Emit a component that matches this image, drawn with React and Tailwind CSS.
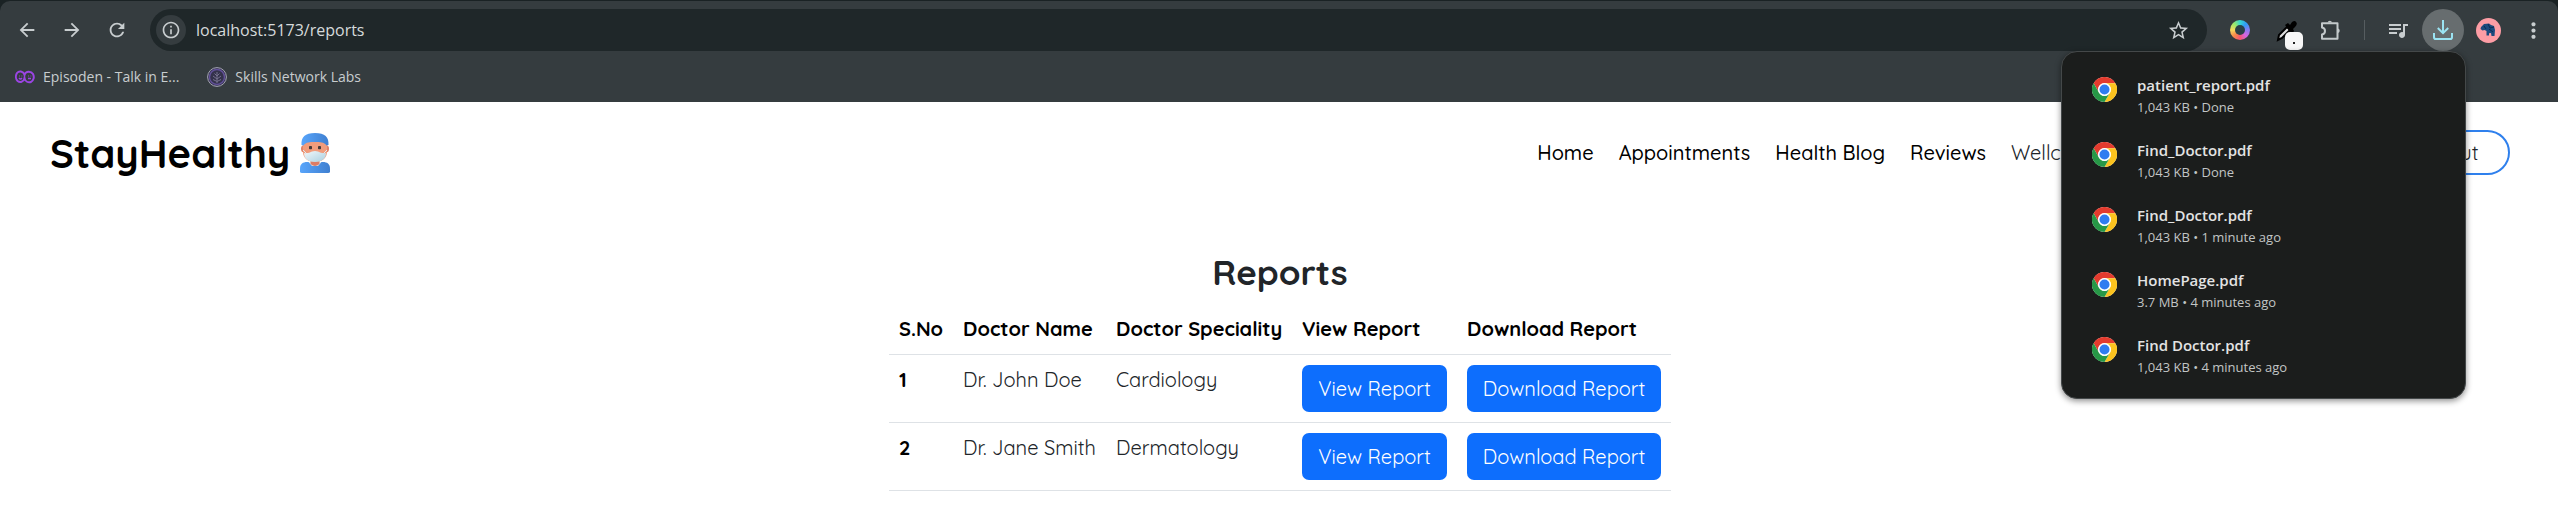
import React from "react";
import {
  MdArrowBack,
  MdArrowForward,
  MdRefresh,
  MdInfoOutline,
  MdStarBorder,
  MdQueueMusic,
  MdMoreVert,
} from "react-icons/md";

const downloads = [
  { name: "patient_report.pdf", meta: "1,043 KB • Done" },
  { name: "Find_Doctor.pdf", meta: "1,043 KB • Done" },
  { name: "Find_Doctor.pdf", meta: "1,043 KB • 1 minute ago" },
  { name: "HomePage.pdf", meta: "3.7 MB • 4 minutes ago" },
  { name: "Find Doctor.pdf", meta: "1,043 KB • 4 minutes ago" },
];

const reports = [
  { id: 1, doctor: "Dr. John Doe", speciality: "Cardiology" },
  { id: 2, doctor: "Dr. Jane Smith", speciality: "Dermatology" },
];

const navLinks = ["Home", "Appointments", "Health Blog", "Reviews"];

function ChromeLogo() {
  return (
    <svg viewBox="0 0 48 48" className="size-[25px] shrink-0" aria-hidden="true">
      <circle cx="24" cy="24" r="24" fill="#fff" />
      <path d="M3.2 12A24 24 0 0 1 44.8 12H24a12 12 0 0 0-10.4 18z" fill="#e33b2e" />
      <path d="M44.8 12A24 24 0 0 1 24 48l10.4-18A12 12 0 0 0 24 12z" fill="#fcc31e" />
      <path d="M24 48A24 24 0 0 1 3.2 12l10.400 18a12 12 0 0 0 20.800 0z" fill="#279847" />
      <circle cx="24" cy="24" r="12.4" fill="#fff" />
      <circle cx="24" cy="24" r="9.6" fill="#2f7cf0" />
    </svg>
  );
}

function HealthWorker() {
  return (
    <svg viewBox="0 0 30 40" className="h-10 w-[30px] shrink-0" aria-hidden="true">
      <defs>
        <linearGradient id="cap" x1="0" x2="1">
          <stop offset="0" stopColor="#58a5fb" />
          <stop offset="1" stopColor="#3f7fd0" />
        </linearGradient>
        <linearGradient id="mask" x1="0" x2="1" y2="1">
          <stop offset="0" stopColor="#f2f8fb" />
          <stop offset="1" stopColor="#a9cfe0" />
        </linearGradient>
      </defs>
      <path d="M0 38.500v-3C0 31 3 29 7 29h16c4 0 7 2 7 6.500v3Q30 40 28 40H2q-2 0-2-1.500z" fill="url(#cap)" />
      <path d="M8.500 29h13L18 33h-6z" fill="#e2eef4" />
      <path d="M10.500 27h9v4q-4.500 4-9 0z" fill="#dd7c66" />
      <rect x="1" y="12" width="28" height="7.500" rx="3.500" fill="#e08268" />
      <path d="M3 8h24v11c0 6-5 10-12 10S3 25 3 19z" fill="#f19c7c" />
      <path d="M1.500 12C1 4 5 0 15 0s14 4 13.500 12l-2 .5C24 9 20 9 15 9S6 9 3.500 12.500z" fill="url(#cap)" />
      <path d="M3 17l4 4M27 17l-4 4" stroke="#dfeaf0" strokeWidth="1" />
      <path d="M4 20Q8 21 12 18.500q3-1 6 0 4 2.500 8 1.500C26 26 21 29 15 29S4 26 4 20z" fill="url(#mask)" />
      <rect x="9" y="13" width="3" height="3.200" rx=".8" fill="#453a3a" />
      <rect x="18" y="13" width="3" height="3.200" rx=".8" fill="#453a3a" />
    </svg>
  );
}

function EpisodenIcon() {
  return (
    <svg viewBox="0 0 20 14" className="h-[14px] w-5 shrink-0" fill="none" stroke="#9b45e4" strokeWidth="2" aria-hidden="true">
      <path d="M2 3C4 .5 8 1 9.500 4.500 11 1 16 .8 18 4c1.600 3 .6 6.500-2 8-2.800 1-5.500-.8-6.500-3.500C8.500 12 5 13 2.600 11 .5 9 .5 5.500 2 3z" />
      <path d="M9.500 4.500v4.500" strokeWidth="1.500" />
      <path d="M4 8q1.500 2 3 0M13 8.500h3" strokeWidth="1.300" />
      <path d="M4 6h.8M6.500 6h.8M13 6h.8M15.500 6h.8" strokeWidth="1.200" />
    </svg>
  );
}

function SkillsIcon() {
  return (
    <svg viewBox="0 0 20 20" className="size-5 shrink-0" fill="none" aria-hidden="true">
      <circle cx="10" cy="10" r="9.400" fill="#34324c" stroke="#a6a6b5" strokeWidth="1" />
      <circle cx="10" cy="10" r="7.500" stroke="#62519a" strokeWidth="1.400" />
      <path d="M10 16V5M10 12L6 9M10 12l4-3M10 9L7.500 6.500M10 9l2.500-2.500M6 12.500l4 2 4-2" stroke="#77728f" strokeWidth="1" />
    </svg>
  );
}

function ColorRing() {
  return (
    <span className="block size-5 rounded-full bg-[conic-gradient(from_0deg,#35d6d0,#2f9bf5,#8a7bf0,#d765e0,#f5566f,#fa8a4a,#f6d95e,#9be86a,#35d6d0)] p-[5px]">
      <span className="block size-full rounded-full bg-[#2b4147]" />
    </span>
  );
}

function PickerIcon() {
  return (
    <svg viewBox="0 0 28 30" className="h-[30px] w-7" aria-hidden="true">
      <path d="M3 20l1-5 8-8 3 3-8 8z" fill="#dedede" stroke="#000" strokeWidth="2" />
      <path d="M10 5l3-2 2 2 2-3q3-2 4 0 2 2-1 5l-2 2 1 2-2 3z" fill="#000" />
      <rect x="10" y="12" width="18" height="18" rx="5" fill="#f7f7f7" />
      <rect x="18" y="22" width="2" height="2" fill="#222" />
    </svg>
  );
}

function ExtensionIcon() {
  return (
    <svg viewBox="0 0 22 22" className="size-[22px]" fill="none" stroke="#c3c9cb" strokeWidth="2" strokeLinejoin="round" aria-hidden="true">
      <path d="M2 4.200h15.500v15.500H2v-4.200c4-.8 4-6.300 0-7z" />
      <path d="M7.500 3.500a2.400 2.400 0 0 1 4.600 0zM18 9.500a2.400 2.400 0 0 1 0 4.600z" fill="#c3c9cb" stroke="none" />
    </svg>
  );
}

function DownloadIcon() {
  return (
    <svg viewBox="0 0 20 20" className="size-5" fill="none" stroke="#9be3f2" strokeWidth="2" aria-hidden="true">
      <path d="M10 0v13M4.800 8L10 13.200 15.200 8" />
      <path d="M1 13v4.200Q1 19 2.800 19h14.400q1.800 0 1.800-1.800V13" />
    </svg>
  );
}

function ProfileIcon() {
  return (
    <svg viewBox="0 0 25 25" className="size-[25px]" aria-hidden="true">
      <circle cx="12.500" cy="12.500" r="12.500" fill="#fd9da5" />
      <path d="M5 9l3-3 5-.5 2 1.500 3 1 1 4-.5 6h-3l-.5-3-2 .3v2.200h-2.500V13l-2-1-2 .5-2-1.500z" fill="#1c4a7e" />
      <path d="M12 6l2 4 4-1M13 11l4 3M8 8l2 3" stroke="#0c2a52" strokeWidth="1" fill="none" />
    </svg>
  );
}

const iconButton = "flex size-[42px] shrink-0 items-center justify-center rounded-full";

function BrowserBar() {
  return (
    <header className="bg-[#1a2224] pt-px font-['Open_Sans','Noto_Sans',sans-serif] text-[#c8cdcf]">
      <div className="rounded-t-[10px] bg-[#353c3f]">
        <div className="flex items-center pr-1 pl-[6px] pt-2">
          <div className="flex w-36 shrink-0 gap-[3px]">
            <button aria-label="Back" className={iconButton}><MdArrowBack size={22} /></button>
            <button aria-label="Forward" className={iconButton}><MdArrowForward size={22} /></button>
            <button aria-label="Reload" className={iconButton}><MdRefresh size={22} /></button>
          </div>
          <div className="flex h-[42px] min-w-0 grow items-center rounded-full bg-[#1f2729] pr-2 pl-[6px]">
            <button aria-label="Site information" className="flex size-[30px] shrink-0 items-center justify-center rounded-full bg-[#353c3f]">
              <MdInfoOutline size={20} />
            </button>
            <input
              aria-label="Address"
              defaultValue="localhost:5173/reports"
              className="ml-[10px] min-w-0 grow bg-transparent text-base leading-6 text-[#d6dadb] outline-none"
            />
            <button aria-label="Bookmark this page" className={iconButton}><MdStarBorder size={23} /></button>
          </div>
          <div className="flex shrink-0 items-center pl-3">
            <button aria-label="Color picker" className={iconButton}><ColorRing /></button>
            <button aria-label="Eyedropper" className={`${iconButton} ml-[7px] pt-[10px]`}><PickerIcon /></button>
            <button aria-label="Extensions" className={iconButton}><ExtensionIcon /></button>
            <span className="mx-3 h-5 w-px bg-[#565d60]" />
            <button aria-label="Media" className={iconButton}><MdQueueMusic size={24} /></button>
            <button aria-label="Downloads" className={`${iconButton} ml-[3px] bg-[#676d6f]`}><DownloadIcon /></button>
            <button aria-label="Profile" className={`${iconButton} ml-[3px]`}><ProfileIcon /></button>
            <button aria-label="Menu" className={`${iconButton} ml-[3px]`}><MdMoreVert size={25} /></button>
          </div>
        </div>
        <nav aria-label="Bookmarks" className="flex h-[51px] items-center gap-7 pl-[15px] text-sm">
          <a href="#episoden" className="flex items-center gap-2"><EpisodenIcon />Episoden - Talk in E...</a>
          <a href="#skills" className="flex items-center gap-2"><SkillsIcon />Skills Network Labs</a>
        </nav>
      </div>
    </header>
  );
}

function DownloadsPopup() {
  return (
    <aside
      aria-label="Recent downloads"
      className="absolute top-[51px] right-[92px] z-10 w-[405px] rounded-2xl border border-[#444849] bg-[#1b1d1c] pt-[21px] pr-6 pb-5 pl-[30px] font-['Open_Sans','Noto_Sans',sans-serif] shadow-[0_2px_6px_rgba(0,0,0,0.45)]"
    >
      <ul className="flex flex-col gap-5">
        {downloads.map((file, i) => (
          <li key={i} className="flex h-[45px] gap-5">
            <div className="pt-1"><ChromeLogo /></div>
            <div>
              <p className="text-[15px] leading-6 font-semibold text-[#e3e3e3]">{file.name}</p>
              <p className="text-[13px] leading-5 text-[#c2c5c5]">{file.meta}</p>
            </div>
          </li>
        ))}
      </ul>
    </aside>
  );
}

function SiteNav() {
  return (
    <nav aria-label="Main" className="flex items-center justify-between pt-7 pr-12 pl-[50px]">
      <a href="#home" className="flex items-center gap-[10px] text-[40px] leading-[44px] font-bold text-black">
        StayHealthy
        <HealthWorker />
      </a>
      <ul className="flex items-center gap-[25px] text-xl leading-[30px] text-black">
        {navLinks.map((label) => (
          <li key={label} className="shrink-0">
            <a href={`#${label}`} className="font-medium whitespace-nowrap">{label}</a>
          </li>
        ))}
        <li className="w-[346px] shrink-0 text-[#212529]">Wellcome</li>
        <li>
          <button className="h-[45px] w-32 rounded-full border-2 border-[#2f80ed] text-[#212529]">Logout</button>
        </li>
      </ul>
    </nav>
  );
}

function ReportsTable() {
  const cell = "border-b border-[#dee2e6] p-[10px]";
  const action = "h-[47px] w-full rounded-[7px] bg-[#0d6efd] text-white whitespace-nowrap";
  return (
    <main className="flex flex-col items-center pt-[74px] pl-[2px]">
      <h1 className="text-[35px] leading-[46px] font-bold text-[#212529]">Reports</h1>
      <table className="mt-[9px] w-[782px] table-fixed border-separate border-spacing-0 text-left text-xl leading-[30px] text-[#212529]">
        <colgroup>
          <col className="w-[64px]" />
          <col className="w-[153px]" />
          <col className="w-[186px]" />
          <col className="w-[165px]" />
          <col />
        </colgroup>
        <thead>
          <tr className="text-black">
            {["S.No", "Doctor Name", "Doctor Speciality", "View Report", "Download Report"].map((h) => (
              <th key={h} scope="col" className={`${cell} font-bold whitespace-nowrap`}>{h}</th>
            ))}
          </tr>
        </thead>
        <tbody>
          {reports.map((r) => (
            <tr key={r.id} className="align-top">
              <th scope="row" className={`${cell} font-bold text-black`}>{r.id}</th>
              <td className={`${cell} whitespace-nowrap`}>{r.doctor}</td>
              <td className={cell}>{r.speciality}</td>
              <td className={cell}><button className={action}>View Report</button></td>
              <td className={cell}><button className={action}>Download Report</button></td>
            </tr>
          ))}
        </tbody>
      </table>
    </main>
  );
}

export default function App() {
  return (
    <div className="relative min-h-screen bg-white font-['Quicksand','Lato',sans-serif]">
      <BrowserBar />
      <SiteNav />
      <ReportsTable />
      <DownloadsPopup />
    </div>
  );
}
